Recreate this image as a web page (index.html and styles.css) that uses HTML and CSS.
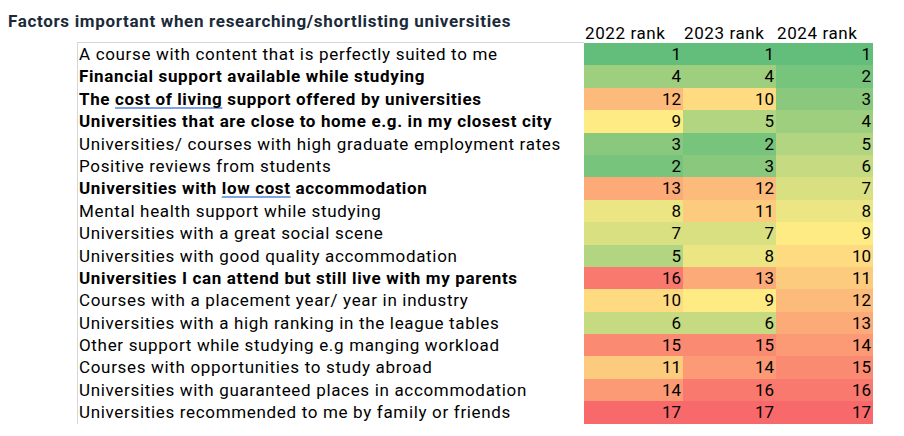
FILE: index.html
```html
<!DOCTYPE html>
<html>
<head>
<meta charset="utf-8">
<link rel="stylesheet" href="styles.css">
</head>
<body>
<div class="sheet">
  <h1 class="title">Factors important when researching/shortlisting universities</h1>
  <div class="colhead c1">2022 rank</div>
  <div class="colhead c2">2023 rank</div>
  <div class="colhead c3">2024 rank</div>
  <div class="rule"></div>

  <div class="lbl">A course with content that is perfectly suited to me</div>
  <div class="num r1">1</div><div class="num r1">1</div><div class="num r1">1</div>

  <div class="lbl b">Financial support available while studying</div>
  <div class="num r4">4</div><div class="num r4">4</div><div class="num r2">2</div>

  <div class="lbl b">The <span class="sp">cost of living</span> support offered by universities</div>
  <div class="num r12">12</div><div class="num r10">10</div><div class="num r3">3</div>

  <div class="lbl b">Universities that are close to home e.g. in my closest city</div>
  <div class="num r9">9</div><div class="num r5">5</div><div class="num r4">4</div>

  <div class="lbl">Universities/ courses with high graduate employment rates</div>
  <div class="num r3">3</div><div class="num r2">2</div><div class="num r5">5</div>

  <div class="lbl">Positive reviews from students</div>
  <div class="num r2">2</div><div class="num r3">3</div><div class="num r6">6</div>

  <div class="lbl b">Universities with <span class="sp">low cost</span> accommodation</div>
  <div class="num r13">13</div><div class="num r12">12</div><div class="num r7">7</div>

  <div class="lbl">Mental health support while studying</div>
  <div class="num r8">8</div><div class="num r11">11</div><div class="num r8">8</div>

  <div class="lbl">Universities with a great social scene</div>
  <div class="num r7">7</div><div class="num r7">7</div><div class="num r9">9</div>

  <div class="lbl">Universities with good quality accommodation</div>
  <div class="num r5">5</div><div class="num r8">8</div><div class="num r10">10</div>

  <div class="lbl b">Universities I can attend but still live with my parents</div>
  <div class="num r16">16</div><div class="num r13">13</div><div class="num r11">11</div>

  <div class="lbl">Courses with a placement year/ year in industry</div>
  <div class="num r10">10</div><div class="num r9">9</div><div class="num r12">12</div>

  <div class="lbl">Universities with a high ranking in the league tables</div>
  <div class="num r6">6</div><div class="num r6">6</div><div class="num r13">13</div>

  <div class="lbl">Other support while studying e.g manging workload</div>
  <div class="num r15">15</div><div class="num r15">15</div><div class="num r14">14</div>

  <div class="lbl">Courses with opportunities to study abroad</div>
  <div class="num r11">11</div><div class="num r14">14</div><div class="num r15">15</div>

  <div class="lbl">Universities with guaranteed places in accommodation</div>
  <div class="num r14">14</div><div class="num r16">16</div><div class="num r16">16</div>

  <div class="lbl">Universities recommended to me by family or friends</div>
  <div class="num r17">17</div><div class="num r17">17</div><div class="num r17">17</div>
</div>
</body>
</html>
```
FILE: styles.css
```css
html, body {
  margin: 0;
  padding: 0;
  background: #ffffff;
}
body {
  font-family: Roboto, "Liberation Sans", sans-serif;
  color: #000;
}
.sheet {
  display: grid;
  grid-template-columns: 77px 507px 99px 93px 97px;
  grid-template-rows: 42px 1px repeat(17, 22.4px);
}
.title {
  grid-column: 1 / 3;
  grid-row: 1;
  margin: 0;
  padding: 11px 0 0 8px;
  font-size: 17px;
  font-weight: 700;
  line-height: 20px;
  letter-spacing: 0.67px;
  color: #1b2a3a;
  white-space: nowrap;
}
.colhead {
  grid-row: 1;
  align-self: end;
  font-size: 17px;
  line-height: 18px;
  letter-spacing: 0.6px;
  white-space: nowrap;
  padding-left: 1px;
}
.c1 { grid-column: 3; }
.c2 { grid-column: 4; }
.c3 { grid-column: 5; }
.rule {
  grid-column: 2;
  grid-row: 2;
  background: #d6d6d6;
}
.lbl {
  grid-column: 2;
  border-left: 1px solid #d6d6d6;
  padding-left: 1px;
  font-size: 17px;
  line-height: 22.4px;
  letter-spacing: 0.67px;
  white-space: nowrap;
}
.lbl.b { font-weight: 700; letter-spacing: 0.64px; }
.sp {
  text-decoration: underline;
  text-decoration-color: #7ea3ea;
  text-decoration-thickness: 2px;
  text-underline-offset: 2px;
  text-decoration-skip-ink: none;
}
.num {
  font-size: 17px;
  line-height: 22.4px;
  text-align: right;
  padding-right: 2px;
}
.r1 { background: #63be7b; }
.r2 { background: #77c47c; }
.r3 { background: #8ac97d; }
.r4 { background: #9ecf7e; }
.r5 { background: #b1d580; }
.r6 { background: #c5da81; }
.r7 { background: #d8e082; }
.r8 { background: #ece583; }
.r9 { background: #ffeb84; }
.r10 { background: #fedb81; }
.r11 { background: #fdcb7e; }
.r12 { background: #fcba7b; }
.r13 { background: #fcaa78; }
.r14 { background: #fb9a74; }
.r15 { background: #fa8a71; }
.r16 { background: #f9796e; }
.r17 { background: #f8696b; }
```
